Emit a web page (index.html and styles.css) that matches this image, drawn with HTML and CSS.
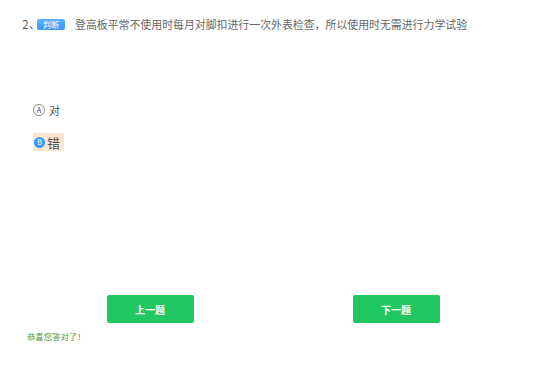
FILE: index.html
```html
<!DOCTYPE html>
<html lang="zh-CN">
<head>
    <meta charset="UTF-8">
    <meta name="viewport" content="width=device-width, initial-scale=1.0">
    <title>判断题</title>
    <link rel="stylesheet" href="styles.css">
</head>
<body>
    <div class="question">
        <span class="num">2、</span>
        <span class="badge">判断</span>
        <span class="title">登高板平常不使用时每月对脚扣进行一次外表检查，所以使用时无需进行力学试验</span>
    </div>

    <div class="options">
        <div class="option">
            <span class="letter">A</span>
            <span class="label">对</span>
        </div>
        <div class="option selected">
            <span class="letter">B</span>
            <span class="label">错</span>
        </div>
    </div>

    <div class="nav">
        <div class="nav-cell"><button class="btn">上一题</button></div>
        <div class="nav-cell"><button class="btn">下一题</button></div>
    </div>

    <p class="tip">恭喜您答对了！</p>
</body>
</html>
```

FILE: styles.css
```css
body {
    margin: 0;
    font-family: "Noto Sans CJK SC", "Liberation Sans", sans-serif;
    background: #fff;
    color: #666;
}

.question {
    display: flex;
    align-items: center;
    padding: 18px 0 0 22px;
    height: 12px;
    font-size: 10.9px;
    line-height: 12px;
    white-space: nowrap;
}

.num {
    flex: 0 0 12px;
    min-width: 0;
    font-size: 12px;
}

.badge {
    position: relative;
    display: inline-block;
    flex: 0 0 28px;
    height: 11px;
    line-height: 11px;
    margin: 0 10px 0 3px;
    border-radius: 2px;
    background: linear-gradient(#5ab4ff, #3a98f2);
    color: #fff;
    font-size: 8px;
    text-align: center;
}

.options {
    margin-top: 74px;
    padding-left: 33px;
}

.option {
    display: flex;
    align-items: center;
    gap: 4px;
    width: max-content;
    height: 12px;
    font-size: 11px;
    color: #555;
}

.letter {
    box-sizing: border-box;
    width: 12px;
    height: 12px;
    border: 1px solid #888;
    border-radius: 50%;
    font-size: 8px;
    line-height: 10px;
    text-align: center;
    color: #555;
}

.option.selected {
    margin-top: 17px;
    height: 18px;
    padding: 0 4px 0 1px;
    gap: 2px;
    background: #fde6d2;
    font-size: 13px;
}

.option.selected .letter {
    width: 11px;
    height: 11px;
    border: none;
    background: #3a9cf6;
    color: #fff;
    font-size: 7px;
    line-height: 11px;
}

.nav {
    display: flex;
    margin: 144px 37px 0 27px;
}

.nav-cell {
    flex: 1;
    display: flex;
    justify-content: center;
}

.btn {
    width: 87px;
    height: 28px;
    border: none;
    border-radius: 2px;
    background: #21c862;
    color: #fff;
    font-family: inherit;
    font-size: 10px;
    font-weight: bold;
}

.tip {
    margin: 8px 0 0 27px;
    font-size: 8.4px;
    line-height: 10px;
    color: #4a9a3a;
}
```
